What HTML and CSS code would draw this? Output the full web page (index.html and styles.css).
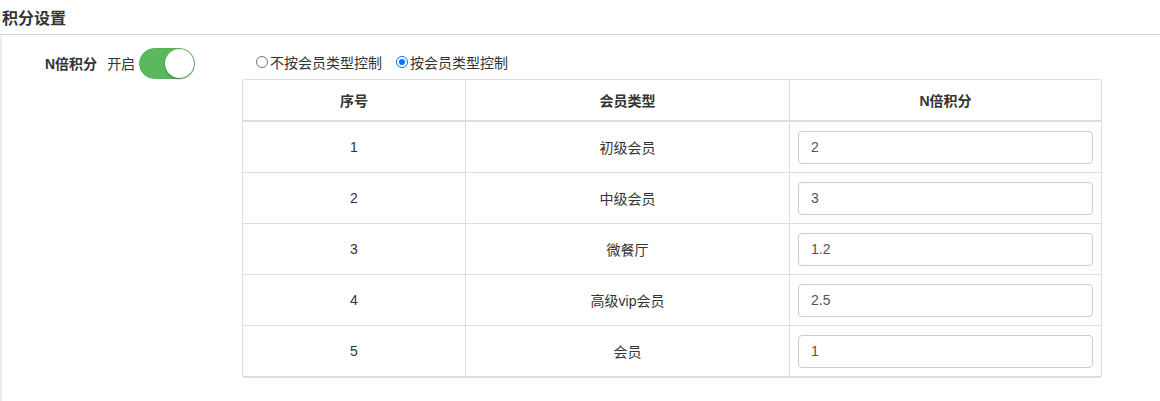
FILE: index.html
```html
<!DOCTYPE html>
<html>
<head>
<meta charset="utf-8">
<link rel="stylesheet" href="styles.css">
</head>
<body>
<div class="page">
  <h2 class="title">积分设置</h2>
  <div class="section">
    <div class="row">
      <div class="label-group">
        <span class="label">N倍积分</span>
        <span class="state">开启</span>
        <span class="toggle"><span class="knob"></span></span>
      </div>
      <div class="content">
        <div class="radios">
          <label class="radio"><span class="dot"></span>不按会员类型控制</label>
          <label class="radio checked"><span class="dot"></span>按会员类型控制</label>
        </div>
        <table class="grid">
          <thead>
            <tr><th class="c1">序号</th><th class="c2">会员类型</th><th class="c3">N倍积分</th></tr>
          </thead>
          <tbody>
            <tr><td>1</td><td>初级会员</td><td><div class="input">2</div></td></tr>
            <tr><td>2</td><td>中级会员</td><td><div class="input">3</div></td></tr>
            <tr><td>3</td><td>微餐厅</td><td><div class="input">1.2</div></td></tr>
            <tr><td>4</td><td>高级vip会员</td><td><div class="input">2.5</div></td></tr>
            <tr><td>5</td><td>会员</td><td><div class="input">1</div></td></tr>
          </tbody>
        </table>
      </div>
    </div>
  </div>
</div>
</body>
</html>
```
FILE: styles.css
```css
html, body {
  margin: 0;
  padding: 0;
  background: #fff;
}
body {
  font-family: "Liberation Sans", Arial, "Noto Sans CJK SC", sans-serif;
  font-size: 14px;
  color: #333;
}
.page {
  width: 1160px;
  height: 401px;
  overflow: hidden;
}
.title {
  margin: 0;
  padding: 8px 0 0 2px;
  font-size: 16px;
  font-weight: bold;
  line-height: 22px;
  color: #333;
  border-bottom: 1px solid #d2d2d2;
  box-sizing: border-box;
  height: 35px;
}
.section {
  border-left: 2px solid #eeeeee;
  height: 366px;
  box-sizing: border-box;
}
.row {
  display: flex;
}
.label-group {
  display: flex;
  align-items: center;
  padding: 12px 0 0 43px;
  height: 32px;
  width: 197px;
  box-sizing: content-box;
}
.label {
  font-weight: bold;
}
.state {
  margin-left: 10px;
}
.toggle {
  margin-left: 4px;
  width: 56px;
  height: 31px;
  border-radius: 16px;
  background: #5cb85c;
  position: relative;
  box-sizing: border-box;
  border: 1px solid #58b158;
}
.knob {
  position: absolute;
  right: 0;
  top: 0;
  width: 29px;
  height: 29px;
  border-radius: 50%;
  background: #fff;
  box-shadow: 0 1px 2px rgba(0,0,0,0.35);
}
.content {
  padding-top: 19px;
}
.radios {
  display: flex;
  align-items: center;
  height: 16px;
  padding-left: 14px;
  margin-bottom: 9px;
}
.radio {
  display: flex;
  align-items: center;
  margin-right: 14px;
}
.dot {
  width: 12px;
  height: 12px;
  border-radius: 50%;
  border: 1px solid #767676;
  box-sizing: border-box;
  margin-right: 2px;
  position: relative;
}
.radio.checked .dot {
  border-color: #0075ff;
}
.radio.checked .dot::after {
  content: "";
  position: absolute;
  left: 2px;
  top: 2px;
  width: 6px;
  height: 6px;
  border-radius: 50%;
  background: #0075ff;
}
.grid {
  border-collapse: separate;
  border-spacing: 0;
  width: 860px;
  border: 1px solid #ddd;
  border-bottom-width: 2px;
  border-radius: 3px;
}
.grid th {
  height: 40px;
  font-weight: bold;
  text-align: center;
  border-bottom: 2px solid #ddd;
  padding: 0;
}
.grid td {
  height: 50px;
  text-align: center;
  padding: 0;
  border-top: 1px solid #ddd;
}
.grid tbody tr:first-child td {
  border-top: none;
}
.grid th + th, .grid td + td {
  border-left: 1px solid #ddd;
}
.c1 { width: 222px; }
.c2 { width: 323px; }
.grid td:last-child {
  text-align: left;
  padding: 0 8px;
}
.input {
  height: 33px;
  box-sizing: border-box;
  border: 1px solid #ccc;
  border-radius: 4px;
  padding: 0 12px;
  line-height: 31px;
  color: #555;
}
```
